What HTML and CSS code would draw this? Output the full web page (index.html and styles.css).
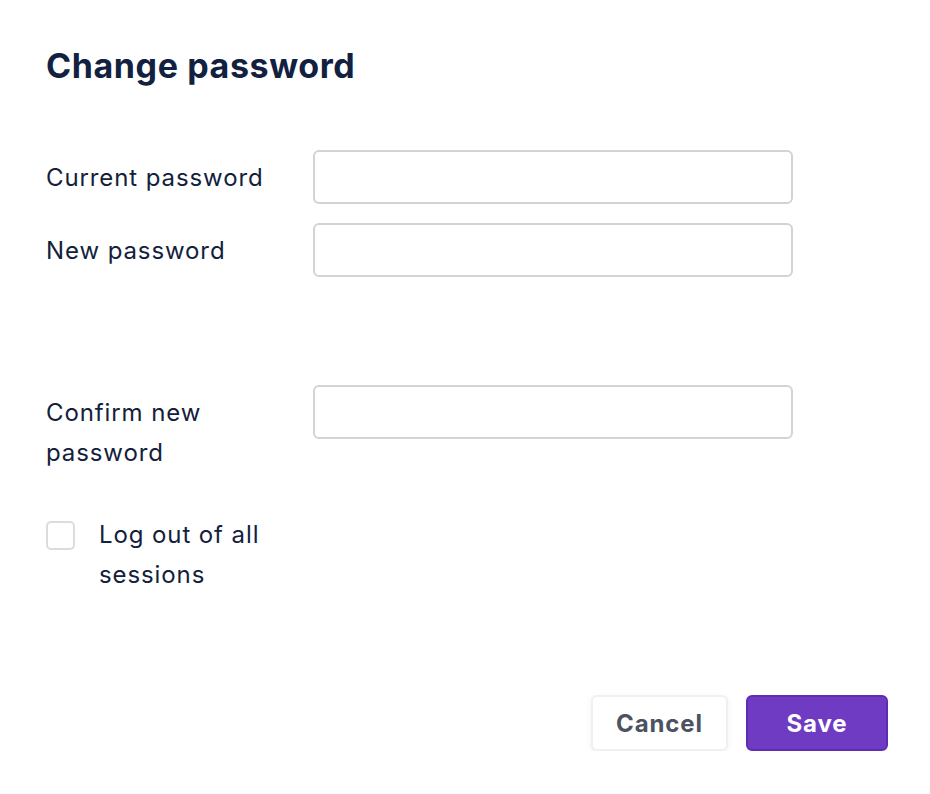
FILE: index.html
```html
<!DOCTYPE html>
<html lang="en">
<head>
<meta charset="utf-8">
<title>Change password</title>
<link rel="stylesheet" href="styles.css">
</head>
<body>
<div class="page">
  <h1 class="title">Change password</h1>
  <form class="form">
    <div class="row">
      <label class="label" for="cur">Current password</label>
      <input class="input" id="cur" type="password">
    </div>
    <div class="row row-new">
      <label class="label" for="new">New password</label>
      <input class="input" id="new" type="password">
    </div>
    <div class="row">
      <label class="label" for="conf">Confirm new password</label>
      <input class="input" id="conf" type="password">
    </div>
    <div class="check-row">
      <span class="checkbox"></span>
      <span class="check-label">Log out of all sessions</span>
    </div>
    <div class="actions">
      <button type="button" class="btn btn-cancel">Cancel</button>
      <button type="button" class="btn btn-save">Save</button>
    </div>
  </form>
</div>
</body>
</html>
```

FILE: styles.css
```css
html, body {
  margin: 0;
  padding: 0;
  background: #ffffff;
}
body {
  font-family: Inter, "Noto Sans", sans-serif;
  color: #13213c;
}
.page {
  width: 930px;
  box-sizing: border-box;
  padding: 46px 42px 0 46px;
}
.title {
  margin: 0;
  font-size: 34px;
  line-height: 40px;
  font-weight: 700;
  color: #12213f;
  letter-spacing: 0.6px;
}
.form {
  margin-top: 64px;
  display: flex;
  flex-direction: column;
}
.row {
  display: flex;
  align-items: flex-start;
  margin-bottom: 19px;
}
.row-new {
  margin-bottom: 108px;
}
.label {
  width: 267px;
  flex: none;
  box-sizing: border-box;
  padding: 8px 20px 0 0;
  font-size: 24px;
  line-height: 40px;
  letter-spacing: 0.9px;
}
.input {
  width: 480px;
  height: 54px;
  box-sizing: border-box;
  border: 2px solid #d3d3d3;
  border-radius: 6px;
  background: #fff;
  margin: 0;
  padding: 0 14px;
  font: inherit;
}
.check-row {
  display: flex;
  align-items: flex-start;
  width: 267px;
  margin-top: 23px;
  gap: 24px;
}
.checkbox {
  flex: none;
  width: 29px;
  height: 29px;
  box-sizing: border-box;
  border: 2px solid #dcdcdc;
  border-radius: 5px;
  margin-top: 6px;
  background: #fff;
}
.check-label {
  font-size: 24px;
  line-height: 40px;
  letter-spacing: 0.9px;
}
.actions {
  display: flex;
  justify-content: flex-end;
  gap: 18px;
  margin-top: 100px;
}
.btn {
  height: 56px;
  box-sizing: border-box;
  border-radius: 6px;
  font-family: Inter, "Noto Sans", sans-serif;
  font-weight: 700;
  font-size: 24px;
  letter-spacing: 0.9px;
  cursor: pointer;
}
.btn-cancel {
  width: 137px;
  background: #fff;
  color: #4b5262;
  border: 2px solid #eef0f4;
  box-shadow: 0 2px 6px rgba(20, 30, 60, 0.06);
}
.btn-save {
  width: 142px;
  background: #6e3bc2;
  color: #ffffff;
  border: 2px solid #5e2db3;
}
```
